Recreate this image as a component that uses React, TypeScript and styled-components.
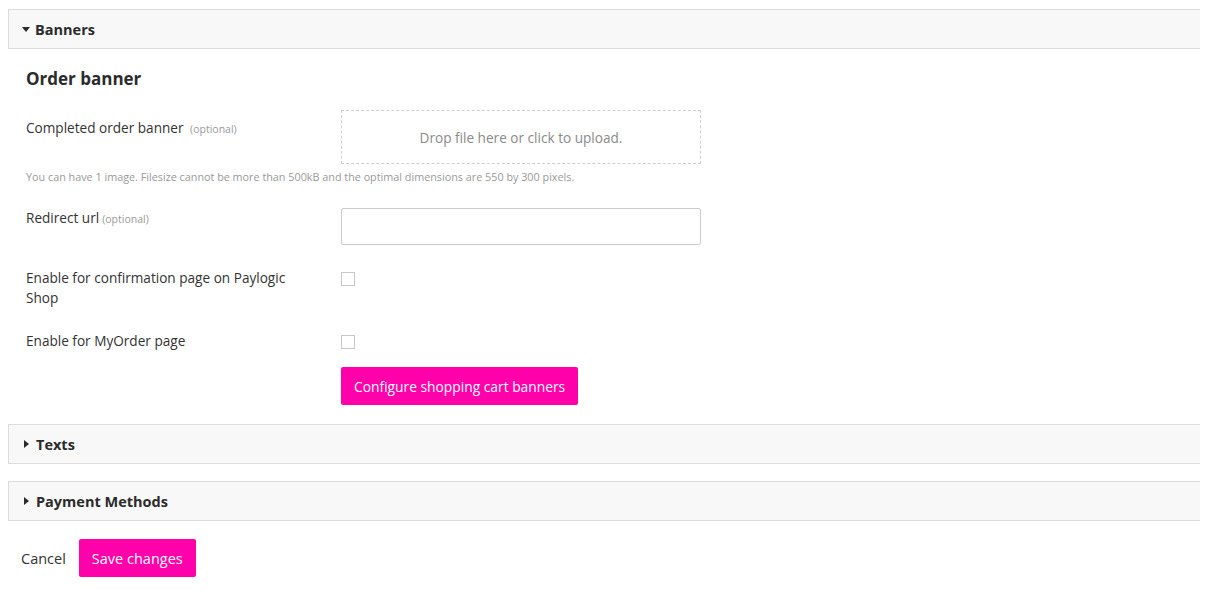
import React from 'react'
import styled, { createGlobalStyle } from 'styled-components'

const GlobalStyle = createGlobalStyle`
  html {
    overflow-x: clip;
  }
  body {
    margin: 8px;
    background: #fff;
    font-family: 'Open Sans', 'Liberation Sans', sans-serif;
    color: #333;
  }
`

const Page = styled.div`
  padding-top: 1px;
`

const Panel = styled.section`
  margin: 0 -60px 17px 0;
`

const PanelHeader = styled.div`
  height: 38px;
  display: flex;
  align-items: center;
  gap: 5px;
  padding-left: 13px;
  background: #f8f8f8;
  border: 1px solid #dcdcdc;
  font-size: 14.5px;
  font-weight: 700;
  color: #2b2b2b;
  cursor: pointer;
`

const Caret = styled.span<{ open?: boolean }>`
  width: 0;
  height: 0;
  ${({ open }) =>
    open
      ? `border-left: 4.5px solid transparent;
         border-right: 4.5px solid transparent;
         border-top: 5px solid #2b2b2b;`
      : `border-top: 4.5px solid transparent;
         border-bottom: 4.5px solid transparent;
         border-left: 5px solid #2b2b2b;
         margin-left: 2px;
         margin-right: 2px;`}
`

const PanelBody = styled.div`
  padding: 18px 0 0 18px;
`

const SectionTitle = styled.h3`
  margin: 0 0 19px;
  font-size: 17px;
  line-height: 24px;
  font-weight: 700;
  color: #2b2b2b;
`

const Row = styled.div<{ mt?: number }>`
  display: flex;
  margin-top: ${({ mt }) => mt ?? 0}px;
`

const Label = styled.div<{ pt?: number; w?: number }>`
  box-sizing: border-box;
  width: 315px;
  padding-top: ${({ pt }) => pt ?? 0}px;
  padding-right: ${({ w }) => (w ? 315 - w : 0)}px;
  font-size: 13.6px;
  line-height: 20px;
  color: #333;

  .optional {
    font-size: 10.5px;
    color: #9a9a9a;
    margin-left: 3px;
  }
`

const DropZone = styled.div`
  width: 358px;
  height: 52px;
  border: 1px dashed #cfcfcf;
  display: flex;
  align-items: center;
  justify-content: center;
  font-size: 13.6px;
  color: #8a8a8a;
  cursor: pointer;
`

const HelpText = styled.div`
  margin-top: 5px;
  font-size: 10.8px;
  line-height: 16px;
  color: #999;
`

const TextInput = styled.input`
  box-sizing: border-box;
  width: 360px;
  height: 37px;
  border: 1px solid #ccc;
  border-radius: 2px;
  padding: 0 10px;
  font-family: inherit;
  outline: none;
`

const Checkbox = styled.span<{ mt?: number }>`
  width: 12px;
  height: 12px;
  margin-top: ${({ mt }) => mt ?? 0}px;
  border: 1px solid #c8c8c8;
  background: #fff;
`

const PinkButton = styled.button<{ size?: number }>`
  height: 38px;
  padding: 0 13px;
  border: none;
  border-radius: 2px;
  background: #ff00aa;
  color: #fff;
  font-family: inherit;
  font-size: ${({ size }) => size ?? 13.8}px;
  cursor: pointer;
`

const ButtonRow = styled.div`
  display: flex;
  margin: 16px 0 19px 315px;
`

const Footer = styled.div`
  display: flex;
  align-items: center;
  gap: 13px;
  margin-top: 18px;
  padding-left: 13px;
`

const CancelLink = styled.span`
  font-size: 14.5px;
  color: #333;
  cursor: pointer;
`

export default function App() {
  return (
    <Page>
      <GlobalStyle />
      <Panel>
        <PanelHeader>
          <Caret open />
          Banners
        </PanelHeader>
        <PanelBody>
          <SectionTitle>Order banner</SectionTitle>
          <Row>
            <Label pt={8}>
              Completed order banner <span className="optional">(optional)</span>
            </Label>
            <DropZone>Drop file here or click to upload.</DropZone>
          </Row>
          <HelpText>
            You can have 1 image. Filesize cannot be more than 500kB and the optimal dimensions are 550 by 300 pixels.
          </HelpText>
          <Row mt={23}>
            <Label>
              Redirect url<span className="optional">(optional)</span>
            </Label>
            <TextInput type="text" />
          </Row>
          <Row mt={23}>
            <Label w={285}>Enable for confirmation page on Paylogic Shop</Label>
            <Checkbox mt={4} />
          </Row>
          <Row mt={23}>
            <Label>Enable for MyOrder page</Label>
            <Checkbox mt={4} />
          </Row>
          <ButtonRow>
            <PinkButton>Configure shopping cart banners</PinkButton>
          </ButtonRow>
        </PanelBody>
      </Panel>
      <Panel>
        <PanelHeader>
          <Caret />
          Texts
        </PanelHeader>
      </Panel>
      <Panel>
        <PanelHeader>
          <Caret />
          Payment Methods
        </PanelHeader>
      </Panel>
      <Footer>
        <CancelLink>Cancel</CancelLink>
        <PinkButton size={14.5}>Save changes</PinkButton>
      </Footer>
    </Page>
  )
}
